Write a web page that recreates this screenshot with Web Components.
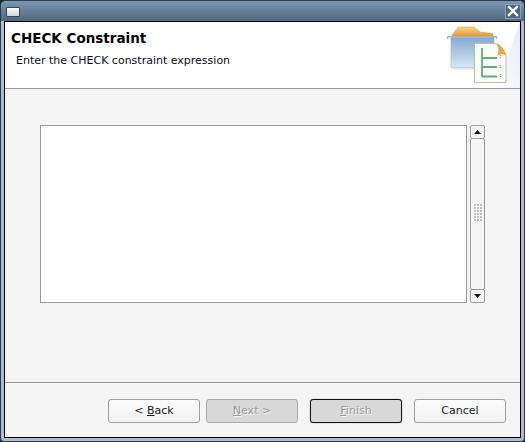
<!DOCTYPE html>
<html>
<head>
<meta charset="utf-8">
<style>
html, body { margin: 0; padding: 0; background: #1c2530; }
body { width: 525px; height: 442px; overflow: hidden; font-family: "DejaVu Sans", sans-serif; }
</style>
</head>
<body>
<wm-window>
  <wizard-banner slot="banner" heading="CHECK Constraint" text="Enter the CHECK constraint expression"></wizard-banner>
  <text-pane slot="main"></text-pane>
  <wizard-btn slot="buttons" style="margin-right:6px"><span>&lt; <u>B</u>ack</span></wizard-btn>
  <wizard-btn slot="buttons" disabled style="margin-right:12px"><span><u>N</u>ext &gt;</span></wizard-btn>
  <wizard-btn slot="buttons" disabled focused style="margin-right:12px"><span><u>F</u>inish</span></wizard-btn>
  <wizard-btn slot="buttons"><span>Cancel</span></wizard-btn>
</wm-window>

<script>
class WmWindow extends HTMLElement {
  constructor() {
    super();
    this.attachShadow({ mode: "open" }).innerHTML = `
    <style>
      :host { display: block; width: 525px; height: 442px; }
      .frame {
        box-sizing: border-box; width: 525px; height: 442px;
        display: flex; flex-direction: column;
        background: #a9bdd2; border: 1px solid #2d3a48; border-radius: 6px 6px 4px 4px;
        overflow: hidden;
      }
      .title {
        height: 20px; flex: none; display: flex; align-items: center; justify-content: space-between;
        padding: 0 3px 0 5px;
        background: linear-gradient(#7b97b5, #4f6880);
      }
      .menu {
        box-sizing: border-box; width: 14px; height: 10px; margin-top: 1px;
        border: 1px solid #34465a; border-radius: 1px;
        background: linear-gradient(#fbfbfb, #cfd3d8);
      }
      .close {
        box-sizing: border-box; width: 16px; height: 15px;
        border: 1px solid #8ea3b8; background: #4f6880;
        display: flex; align-items: center; justify-content: center;
      }
      .inner {
        flex: 1; min-height: 0; margin: 0 3px 3px 3px;
        border: 1px solid #000; background: #f5f5f5;
        display: flex; flex-direction: column;
      }
      .main { flex: 1; min-height: 0; display: flex; padding: 36px 35px 0 35px; }
      .foot {
        height: 55px; flex: none; box-sizing: border-box;
        border-top: 1px solid #9a9a9a;
        display: flex; justify-content: flex-end; padding: 16px 14px 0 0;
      }
    </style>
    <div class="frame">
      <div class="title">
        <div class="menu"></div>
        <div class="close">
          <svg width="12" height="12" viewBox="0 0 12 12"><path d="M2 2 L10 10 M10 2 L2 10" stroke="#fff" stroke-width="2.4" stroke-linecap="square"/></svg>
        </div>
      </div>
      <div class="inner">
        <slot name="banner"></slot>
        <div class="main"><slot name="main"></slot></div>
        <div class="foot"><slot name="buttons"></slot></div>
      </div>
    </div>`;
  }
}

class WizardBanner extends HTMLElement {
  constructor() {
    super();
    this.attachShadow({ mode: "open" });
  }
  connectedCallback() {
    this.shadowRoot.innerHTML = `
    <style>
      :host { display: block; flex: none; }
      .b {
        position: relative; box-sizing: border-box; height: 67px;
        background: #fff; border-bottom: 1px solid #9a9a9a;
        padding: 8px 0 0 6px; overflow: hidden;
      }
      h1 { margin: 0; font: bold 13.500px/16px "DejaVu Sans", sans-serif; color: #000; }
      p { margin: 8px 0 0 5px; font: 11px/14px "DejaVu Sans", sans-serif; color: #0a0a1e; }
      svg { position: absolute; right: 0; top: 0; }
    </style>
    <div class="b">
      <h1>${this.getAttribute("heading")}</h1>
      <p>${this.getAttribute("text")}</p>
      <svg width="75" height="66" viewBox="0 0 75 66">
        <defs>
          <linearGradient id="sw" x1="0" y1="1" x2="1" y2="0"><stop offset="0" stop-color="#ffffff"/><stop offset="1" stop-color="#e8eaf5"/></linearGradient>
          <linearGradient id="box" x1="0" y1="0" x2="0" y2="1"><stop offset="0" stop-color="#86a9d2"/><stop offset="1" stop-color="#d6ebf3"/></linearGradient>
          <linearGradient id="tab" x1="0" y1="0" x2="0" y2="1"><stop offset="0" stop-color="#f8d48c"/><stop offset="1" stop-color="#e49a34"/></linearGradient>
        </defs>
        <path d="M48 66 C58 50 66 24 75 0 V66 Z" fill="url(#sw)"/>
        <path d="M7 13.500 L13 5 H29 L35 10 L48 11.500 V14 H7 Z" fill="url(#tab)" stroke="#d69a45" stroke-width=".5"/>
        <path d="M2 17 V14 H52 V17 H51 V15.500 H3 V17 Z" fill="#a9b4c0"/>
        <rect x="6" y="15.500" width="43" height="30" fill="url(#box)" stroke="#9cb3cc" stroke-width=".6"/>
        <rect x="7" y="46" width="24" height="1.500" fill="#dfe2e8"/>
        <path d="M29.500 21.500 H51 L61 32 V60.500 H29.500 Z" fill="#fbfcf6" stroke="#b4c2a6"/>
        <path d="M51 20.500 C54 25 54 30 52 34 C56 31.500 59 32 61.500 34 C60 28 56 23 51 20.500 Z" fill="#eea548"/>
        <path d="M37 26 V55 M37 36 H52 M37 45 H52 M37 54.500 H52" stroke="#63ae7c" stroke-width="1.800" fill="none"/>
        <path d="M55.500 33 v4 M55.500 43 v4 M55.500 52 v4" stroke="#8fa8a0" stroke-width="1.500" stroke-dasharray="1 1"/>
      </svg>
    </div>`;
  }
}

class TextPane extends HTMLElement {
  constructor() {
    super();
    this.attachShadow({ mode: "open" }).innerHTML = `
    <style>
      :host { display: flex; gap: 3px; width: 445px; height: 178px; }
      .area { box-sizing: border-box; width: 427px; height: 178px; background: #fff; border: 1px solid #9a9a9a; }
      .bar { width: 15px; height: 178px; display: flex; flex-direction: column; }
      .part {
        box-sizing: border-box; border: 1px solid #9a9a9a; border-radius: 2px; background: #f5f5f5;
        display: flex; align-items: center; justify-content: center;
      }
      .arrow { height: 14px; flex: none; }
      .thumb { flex: 1; margin: -1px 0; }
      .grip { width: 8px; height: 17px; margin-top: -3px;
        background-image: radial-gradient(circle at 1px 1px, #c2c2c2 0.9px, transparent 1px);
        background-size: 3px 3px; }
    </style>
    <div class="area"></div>
    <div class="bar">
      <div class="part arrow"><svg width="7" height="4"><path d="M3.500 0 L7 4 H0 Z" fill="#1a1a1a"/></svg></div>
      <div class="part thumb"><div class="grip"></div></div>
      <div class="part arrow"><svg width="7" height="4"><path d="M0 0 H7 L3.500 4 Z" fill="#1a1a1a"/></svg></div>
    </div>`;
  }
}

class WizardBtn extends HTMLElement {
  constructor() {
    super();
    this.attachShadow({ mode: "open" }).innerHTML = `
    <style>
      :host { display: block; width: 92px; height: 24px; font: 11px "DejaVu Sans", sans-serif; color: #1a1a1a; flex: none; }
      .b {
        box-sizing: border-box; width: 100%; height: 100%;
        border: 1px solid #9f9f9f; border-radius: 3px; padding-bottom: 2px;
        background: linear-gradient(#fbfbfb, #f3f3f3);
        display: flex; align-items: center; justify-content: center;
      }
      :host([disabled]) { color: #9a9a9a; }
      :host([disabled]) .b { background: #d8d8d8; border-color: #aaa; }
      :host([focused]) .b { border-color: #111; box-shadow: 0 0 1px 0 #666; }
      ::slotted(span) { text-shadow: none; }
      :host([disabled]) ::slotted(span) { text-shadow: 1px 1px 0 #f4f4f4; }
    </style>
    <div class="b"><slot></slot></div>`;
  }
}

customElements.define("wm-window", WmWindow);
customElements.define("wizard-banner", WizardBanner);
customElements.define("text-pane", TextPane);
customElements.define("wizard-btn", WizardBtn);
</script>
</body>
</html>
